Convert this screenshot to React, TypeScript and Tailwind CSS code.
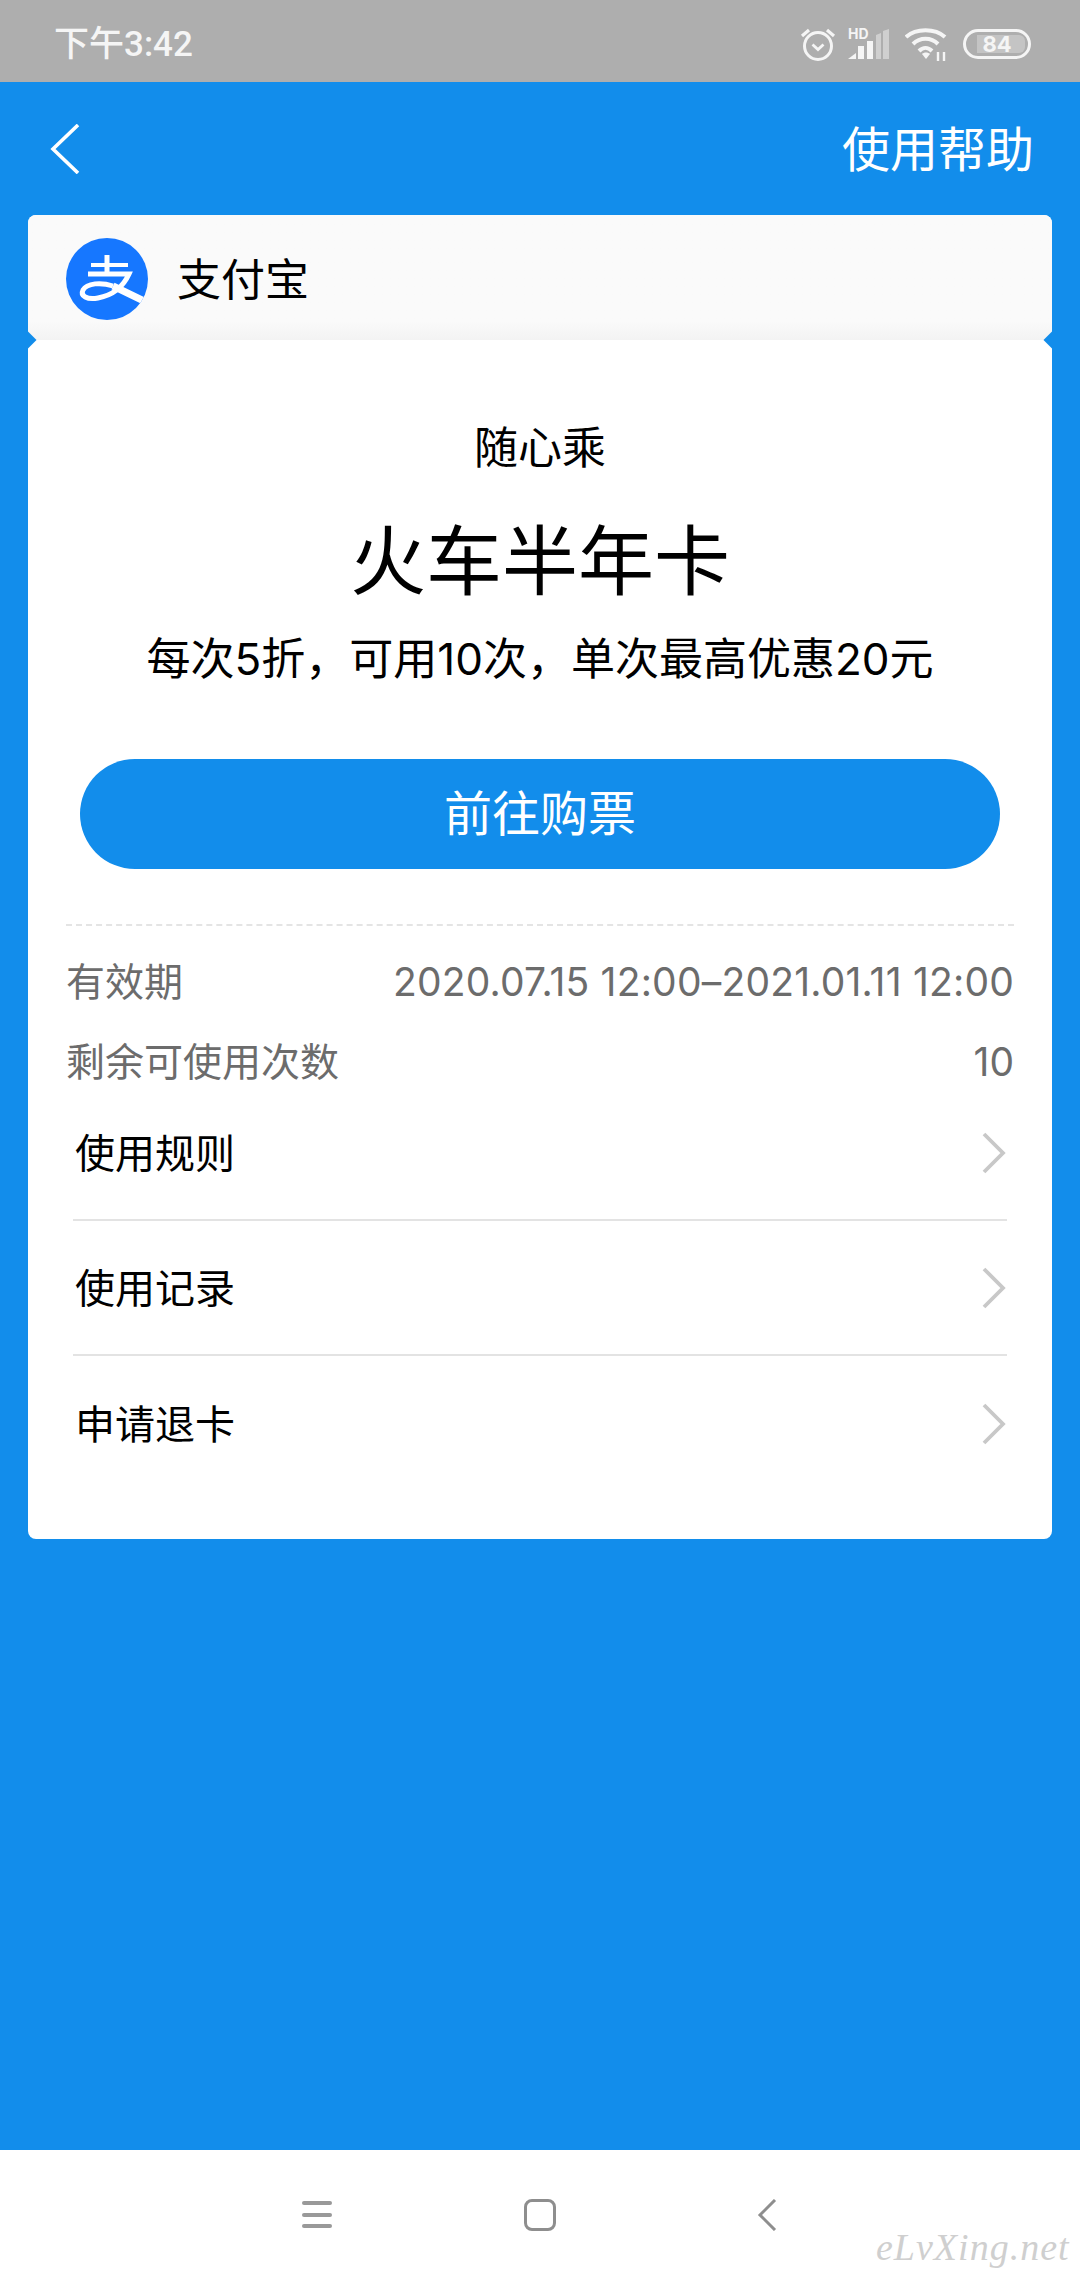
import type { JSX } from "react";

const CJK = "font-['Inter','Noto_Sans_CJK_SC',sans-serif]";

function Chevron(): JSX.Element {
  return (
    <svg width="26" height="42" viewBox="0 0 26 42" fill="none">
      <path d="M3 2 L22 21 L3 40" stroke="#c8c8c8" strokeWidth="3.8" />
    </svg>
  );
}

function StatusIcons(): JSX.Element {
  return (
    <div className="flex items-center text-white">
      <svg width="36" height="36" viewBox="0 0 36 36" fill="none" stroke="#f5f5f5" strokeWidth="3">
        <circle cx="18" cy="20" r="13.5" />
        <path d="M12.5 18.5 L18 23.5 L23.5 18.5" strokeWidth="2.8" />
        <path d="M2 10 L9 4 M34 10 L27 4" strokeWidth="3.2" />
      </svg>
      <svg className="ml-[12px]" width="41" height="38" viewBox="0 -2 41 38">
        <text x="0" y="12" fontSize="14" fontWeight="700" fill="#f5f5f5" fontFamily="Inter">HD</text>
        <path d="M0 32 L8 26 V32 Z" fill="#f5f5f5" />
        <rect x="10" y="19" width="6" height="13" fill="#f5f5f5" />
        <rect x="19" y="14" width="6" height="18" fill="#f5f5f5" />
        <path d="M28 8 L33 6 V32 H28 Z" fill="#cfcfcf" />
        <path d="M35 4 L41 2 V32 H35 Z" fill="#cfcfcf" />
      </svg>
      <svg className="ml-[16px]" width="42" height="36" viewBox="0 0 42 36" fill="none" stroke="#f5f5f5" strokeWidth="4">
        <path d="M1 11 C11 2 30 2 40 11" />
        <path d="M8 18 C15 11 26 11 33 18" />
        <path d="M14 25 C18 21 23 21 27 25" />
        <path d="M21 33 L17 28 C19 26 23 26 25 28 Z" fill="#f5f5f5" stroke="none" />
        <path d="M33 26 V35 M39 26 V35" strokeWidth="2.4" />
      </svg>
      <div className="relative ml-[16px] flex h-[30px] w-[68px] items-center justify-center rounded-full border-[3px] border-[#f5f5f5]">
        <div className="absolute left-[11px] top-[3px] h-[18px] w-[48px] rounded-r-[6px] bg-[#c4c4c4]" />
        <span className="relative font-['Inter',sans-serif] text-[22px] font-bold leading-none text-[#f5f5f5]">84</span>
      </div>
    </div>
  );
}

function AlipayLogo(): JSX.Element {
  return (
    <svg width="82" height="82" viewBox="0 0 82 82">
      <defs>
        <clipPath id="logo-clip">
          <circle cx="41" cy="41" r="41" />
        </clipPath>
      </defs>
      <circle cx="41" cy="41" r="41" fill="#1677ff" />
      <g clipPath="url(#logo-clip)" fill="none" stroke="#fff">
        <path d="M25 27 H62" strokeWidth="4" />
        <path d="M41 17 V36" strokeWidth="5" />
        <path d="M22 36 H63 C58 47 48 57 32 60 C21 62 14 58 17 52 C21 45 35 44 47 48" strokeWidth="5" />
        <path d="M47 48 L80 64" strokeWidth="7" />
      </g>
    </svg>
  );
}

function LinkRow({ label, divider }: { label: string; divider: boolean }): JSX.Element {
  return (
    <div className={`flex h-[135px] items-center justify-between pl-[2px] ${divider ? "border-b-2 border-[#e3e3e3]" : ""}`}>
      <span className="mt-[2px] text-[40px] leading-none text-black">{label}</span>
      <Chevron />
    </div>
  );
}

export default function App(): JSX.Element {
  return (
    <main className={`flex h-[2280px] w-[1080px] flex-col overflow-hidden bg-[#128deb] ${CJK}`}>
      <div className="flex h-[82px] shrink-0 items-center justify-between bg-[#aeaeae] pl-[54px] pr-[49px] pt-[6px]">
        <span className="font-['Roboto','Noto_Sans_CJK_SC',sans-serif] text-[35px] font-medium leading-none text-[#f5f5f5]">下午3:42</span>
        <StatusIcons />
      </div>

      <header className="flex h-[133px] shrink-0 items-center justify-between pl-[50px] pr-[46px]">
        <svg width="30" height="50" viewBox="0 0 30 50" fill="none">
          <path d="M28 1 L3 25 L28 49" stroke="#fff" strokeWidth="3.6" />
        </svg>
        <span className="mt-[2px] text-[48px] leading-none text-white">使用帮助</span>
      </header>

      <section className="relative mx-[28px] h-[1324px] shrink-0 overflow-hidden rounded-[8px] bg-white">
        <div className="flex h-[125px] items-center gap-[29px] bg-gradient-to-b from-[#fafafa] from-85% to-[#f3f3f3] pl-[38px] pt-[3px]">
          <AlipayLogo />
          <span className="mt-[2px] text-[44px] leading-none text-black">支付宝</span>
        </div>
        <div className="absolute left-[-6px] top-[119px] h-3 w-3 rotate-45 bg-[#128deb]" />
        <div className="absolute right-[-6px] top-[119px] h-3 w-3 rotate-45 bg-[#128deb]" />

        <div className="flex flex-col items-center pt-[85px]">
          <p className="text-[44px] leading-[46px] text-black">随心乘</p>
          <p className="mt-[50px] text-[76px] leading-[80px] text-black">火车半年卡</p>
          <p className="mt-[35px] text-[44px] leading-[46px] text-black">每次5折，可用10次，单次最高优惠20元</p>
          <button className="mt-[77px] flex h-[110px] w-[920px] items-center justify-center rounded-full bg-[#128deb] text-[48px] text-white">
            前往购票
          </button>
        </div>

        <div className="mx-[38px] mt-[55px] border-t-2 border-dashed border-[#e4e4e4]" />

        <div className="mx-[38px] mt-[33px] flex items-center justify-between text-[39px] leading-[46px] text-[#6c6c6c]">
          <span>有效期</span>
          <span className="tracking-[0.2px]">2020.07.15 12:00–2021.01.11 12:00</span>
        </div>
        <div className="mx-[38px] mt-[34px] flex items-center justify-between text-[39px] leading-[46px] text-[#6c6c6c]">
          <span>剩余可使用次数</span>
          <span>10</span>
        </div>

        <div className="mx-[45px] mt-[1px] flex flex-col">
          <LinkRow label="使用规则" divider />
          <LinkRow label="使用记录" divider />
          <LinkRow label="申请退卡" divider={false} />
        </div>
      </section>

      <div className="flex-1" />

      <nav className="relative flex h-[130px] shrink-0 items-center bg-white">
        <div className="absolute left-[302px] top-[51px] flex h-[27px] w-[30px] flex-col justify-between">
          <div className="h-[4px] rounded-full bg-[#999]" />
          <div className="h-[4px] rounded-full bg-[#999]" />
          <div className="h-[4px] rounded-full bg-[#999]" />
        </div>
        <div className="absolute left-[524px] top-[49px] h-[32px] w-[32px] rounded-[8px] border-[3px] border-[#8e8e8e]" />
        <svg className="absolute left-[757px] top-[49px]" width="20" height="32" viewBox="0 0 20 32" fill="none">
          <path d="M18 1 L3 16 L18 31" stroke="#8e8e8e" strokeWidth="3" />
        </svg>
        <span className="absolute left-[876px] top-[78px] font-['Liberation_Serif',serif] text-[38px] italic leading-none tracking-[1px] text-[#cfcfcf]">
          eLvXing.net
        </span>
      </nav>
    </main>
  );
}
